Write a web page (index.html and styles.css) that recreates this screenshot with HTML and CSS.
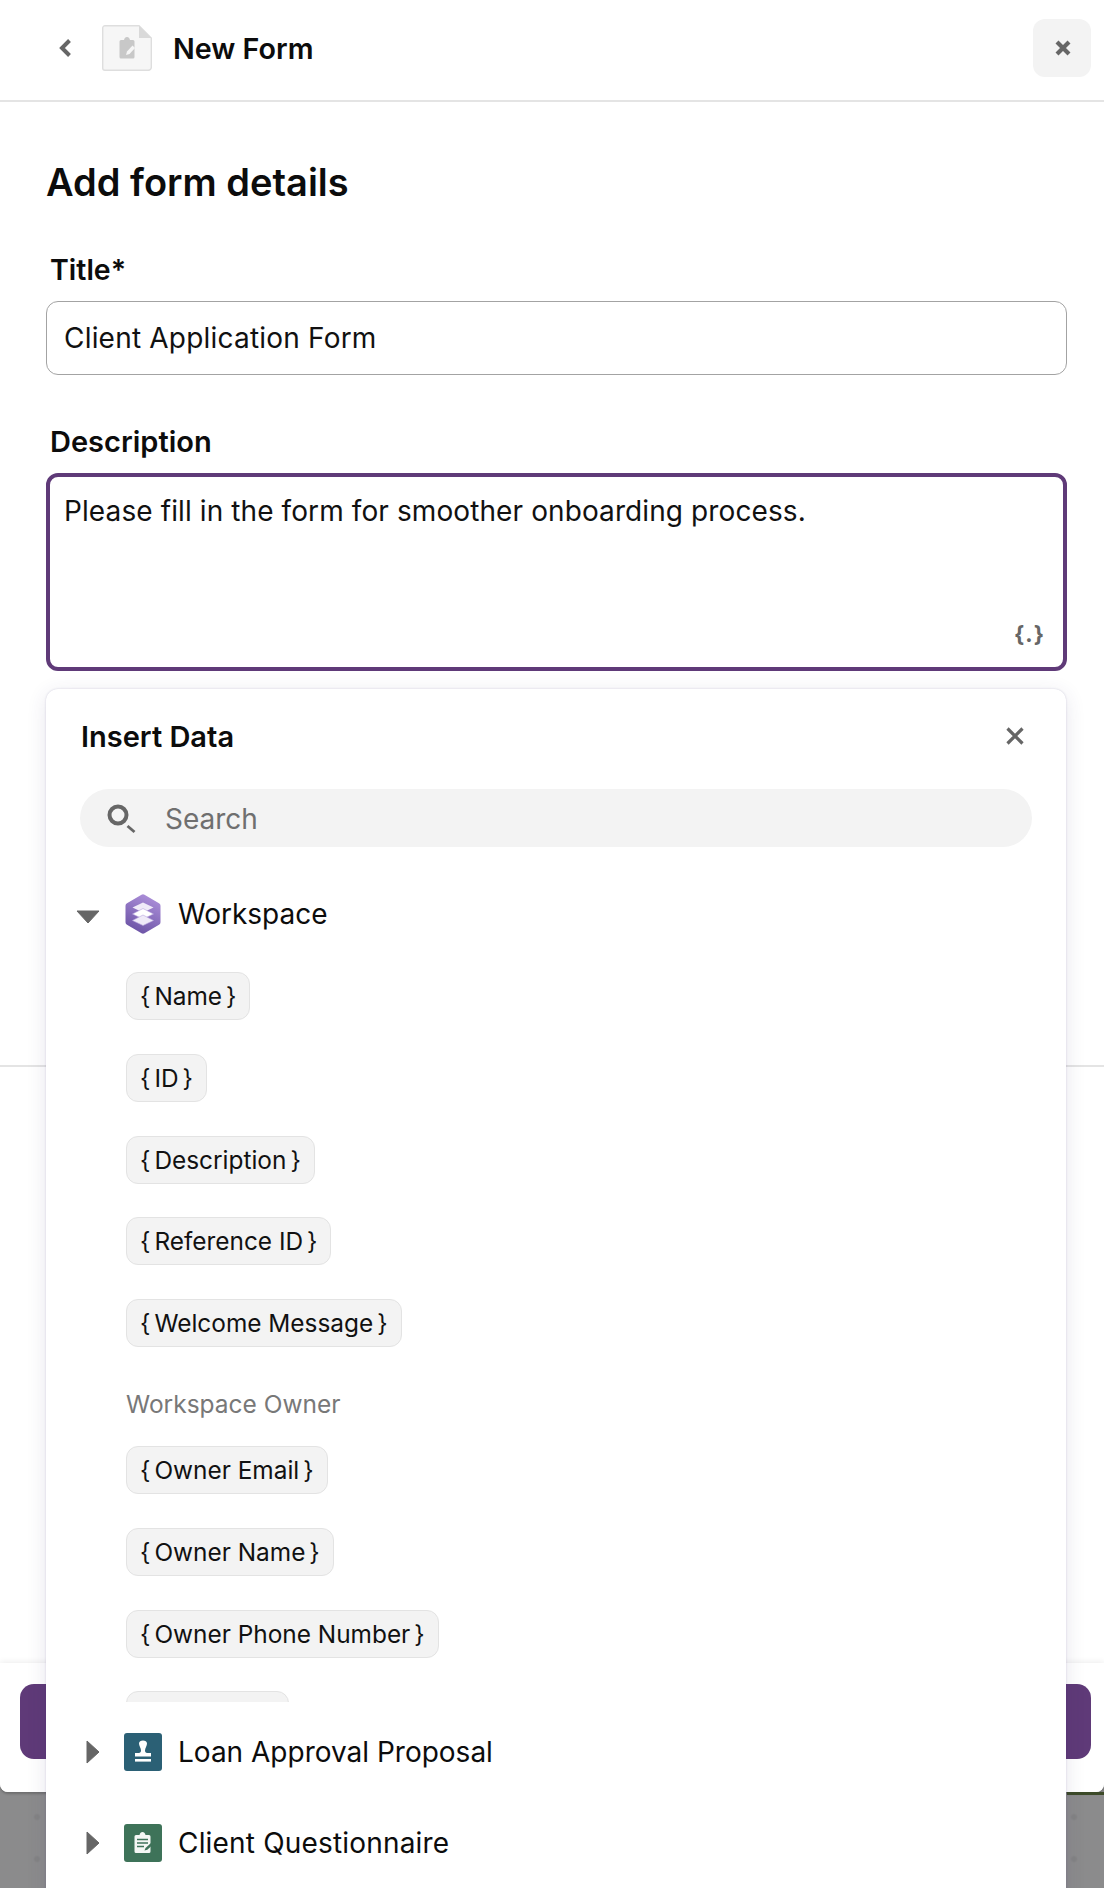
FILE: index.html
```html
<!DOCTYPE html>
<html lang="en">
<head>
<meta charset="utf-8">
<title>New Form</title>
<link rel="stylesheet" href="styles.css">
</head>
<body>
<div class="screen">
  <div class="sheet">
    <header class="topbar">
      <div class="topbar-left">
        <svg class="back" viewBox="0 0 14 20" width="14" height="20"><path d="M11.500 2.500 4 10l7.500 7.500" fill="none" stroke="#666" stroke-width="4"/></svg>
        <svg class="doc" viewBox="0 0 50 46" width="50" height="46">
          <path d="M3 .7h34L49.300 13v29a3 3 0 0 1-3 3.300H3A2.300 2.300 0 0 1 .7 43V3A2.300 2.300 0 0 1 3 .7Z" fill="#f6f6f6" stroke="#dedede" stroke-width="1.400"/>
          <path d="M37 .7 49.300 13H37Z" fill="#d9d9d9"/>
          <path d="M19 15h3c.4-2 1.500-3 3-3s2.600 1 3 3h3a1.500 1.500 0 0 1 1.500 1.500V32a1.500 1.500 0 0 1-1.500 1.500H19a1.500 1.500 0 0 1-1.500-1.500V16.500A1.500 1.500 0 0 1 19 15Z" fill="#c8c8c8"/>
          <path d="m24 30 1-3.500 5.500-6 2.500 2.500-5.500 6Z" fill="#f6f6f6"/>
        </svg>
        <span class="topbar-title">New Form</span>
      </div>
      <button class="close-btn" type="button" aria-label="Close">
        <svg viewBox="0 0 18 18" width="18" height="18"><path d="M3 3l12 12M15 3 3 15" stroke="#666" stroke-width="4.200" fill="none"/></svg>
      </button>
    </header>
    <main class="form">
      <h1 class="form-heading">Add form details</h1>
      <label class="field-label">Title*</label>
      <div class="input">Client Application Form</div>
      <label class="field-label field-label-second">Description</label>
      <div class="textarea">
        Please fill in the form for smoother onboarding process.
        <span class="data-token">{.}</span>
      </div>
    </main>
    <footer class="footer">
      <div class="primary-btn"></div>
    </footer>
  </div>
  <div class="edge-strip"></div>

  <section class="panel">
    <div class="panel-head">
      <span class="panel-title">Insert Data</span>
      <svg viewBox="0 0 20 20" width="20" height="20"><path d="M2.500 2.500l15 15M17.500 2.500l-15 15" stroke="#666" stroke-width="3.200" fill="none"/></svg>
    </div>
    <div class="search">
      <svg class="search-icon" viewBox="0 0 30 32" width="30" height="32"><circle cx="12" cy="13" r="8.500" fill="none" stroke="#666" stroke-width="4"/><path d="m21.500 24 7 6" stroke="#666" stroke-width="2.800"/></svg>
      <span class="search-text">Search</span>
    </div>
    <div class="tree-row tree-row-open">
      <svg class="caret-down" viewBox="0 0 24 14" width="24" height="14"><path d="M1 1h22L12 13Z" fill="#666" stroke="#666" stroke-linejoin="round"/></svg>
      <svg class="tree-icon" viewBox="0 0 36 40" width="36" height="40">
        <defs><linearGradient id="hexfill" x1="0.700" y1="0" x2="0.300" y2="1"><stop offset="0" stop-color="#ad90da"/><stop offset="1" stop-color="#6a52a4"/></linearGradient></defs>
        <path d="M16.500 .8a3 3 0 0 1 3 0l14.500 8.400a3 3 0 0 1 1.500 2.600v16.400a3 3 0 0 1-1.500 2.600L19.500 39.200a3 3 0 0 1-3 0L2 30.800a3 3 0 0 1-1.500-2.600V11.800A3 3 0 0 1 2 9.200Z" fill="url(#hexfill)"/>
        <path d="m18 8.500 10.500 5L18 18.500l-10.500-5Z" fill="#efeaf8"/>
        <path d="m18 14.500 10.500 5.500L18 25 7.500 20Z" fill="#fff" stroke="#b7a4dd" stroke-width=".6"/>
        <path d="m18 21 10.500 5.500L18 31.500 7.500 26.500Z" fill="#efeaf8" stroke="#b7a4dd" stroke-width=".6"/>
      </svg>
      <span>Workspace</span>
    </div>
    <div class="chip-scroll">
      <div class="chip-list">
        <span class="chip">{<i>Name</i>}</span>
        <span class="chip">{<i>ID</i>}</span>
        <span class="chip">{<i>Description</i>}</span>
        <span class="chip">{<i>Reference ID</i>}</span>
        <span class="chip">{<i>Welcome Message</i>}</span>
        <span class="chip-group">Workspace Owner</span>
        <span class="chip">{<i>Owner Email</i>}</span>
        <span class="chip">{<i>Owner Name</i>}</span>
        <span class="chip">{<i>Owner Phone Number</i>}</span>
        <span class="chip chip-cut"></span>
      </div>
    </div>
    <div class="tree-row tree-row-loan">
      <svg class="caret-right" viewBox="0 0 14 24" width="14" height="24"><path d="M1 1v22l12-11Z" fill="#666" stroke="#666" stroke-linejoin="round"/></svg>
      <span class="tile tile-blue">
        <svg viewBox="0 0 38 38" width="38" height="38"><path d="M15 10.500c0-1.900 1.800-3 4-3s4 1.100 4 3c0 2.700-2 4.300-2 7 0 1.500.7 2.500 2.200 2.500h3.800v3.500H11V20h3.800c1.500 0 2.200-1 2.200-2.500 0-2.700-2-4.300-2-7Z" fill="#fff"/><rect x="11" y="26" width="16" height="2.600" fill="#fff"/></svg>
      </span>
      <span>Loan Approval Proposal</span>
    </div>
    <div class="tree-row tree-row-client">
      <svg class="caret-right" viewBox="0 0 14 24" width="14" height="24"><path d="M1 1v22l12-11Z" fill="#666" stroke="#666" stroke-linejoin="round"/></svg>
      <span class="tile tile-green">
        <svg viewBox="0 0 38 38" width="38" height="38"><path d="M12 11h3.500c.4-1.800 1.600-3 3-3s2.600 1.200 3 3H25a1.500 1.500 0 0 1 1.500 1.500v15A1.500 1.500 0 0 1 25 29H12a1.500 1.500 0 0 1-1.500-1.500v-15A1.500 1.500 0 0 1 12 11Z" fill="#f4f7f4"/><path d="M13 15.500h11M13 19h11M13 22.500h7" stroke="#3e7359" stroke-width="1.600"/><path d="m20.500 26.500 1-2.500 5.500-5 1.800 1.800-5.500 5Z" fill="#3e7359"/></svg>
      </span>
      <span class="tree-label-wide">Client Questionnaire</span>
    </div>
  </section>
</div>
</body>
</html>
```
FILE: styles.css
```css
* { box-sizing: border-box; }
html, body { margin: 0; padding: 0; }
body { font-family: Inter, "Liberation Sans", sans-serif; color: #111; background: #8b8b8c; }

.screen {
  position: relative;
  width: 1104px;
  height: 1888px;
  overflow: hidden;
  background-color: #8b8b8c;
  background-image: radial-gradient(circle, #838384 0, #838384 2px, transparent 4px);
  background-size: 1037px 42px;
  background-position: -481.5px 1796px;
}

.sheet {
  display: flex;
  flex-direction: column;
  height: 1792px;
  background: #fff;
  border-radius: 0 0 8px 8px;
  box-shadow: 0 2px 2px rgba(0,0,0,.18);
}
.edge-strip { position: absolute; left: 1067px; top: 1792px; width: 37px; height: 3px; background: #3c4a28; }

.topbar {
  display: flex;
  align-items: center;
  justify-content: space-between;
  height: 102px;
  padding: 0 13px 5px 58px;
  border-bottom: 2px solid #e4e4e4;
  flex: none;
}
.topbar-left { display: flex; align-items: center; }
.back { margin-right: 30px; }
.doc { margin-right: 21px; }
.topbar-title { margin-top: 2px; font-size: 28.700px; font-weight: 600; color: #0c0c0c; }
.close-btn {
  display: flex;
  align-items: center;
  justify-content: center;
  width: 58px;
  height: 58px;
  padding: 0 0 0 2px;
  border: 0;
  border-radius: 12px;
  background: #f3f3f3;
}

.form {
  flex: none;
  height: 965px;
  padding: 58px 37px 0 46px;
  border-bottom: 2px solid #e4e4e4;
}
.form-heading { margin: 0 0 49px; font-size: 38px; line-height: 44px; font-weight: 600; color: #0c0c0c; }
.field-label { display: block; margin: 0 0 14px 4px; font-size: 28.500px; line-height: 34px; font-weight: 600; color: #0c0c0c; }
.field-label-second { margin-top: 50px; font-size: 29px; }
.input {
  height: 74px;
  padding: 0 17px;
  border: 1.500px solid #a3a3a3;
  border-radius: 12px;
  font-size: 28px;
  letter-spacing: .2px;
  line-height: 73px;
}
.textarea {
  position: relative;
  height: 198px;
  padding: 17px 14px;
  border: 4px solid #5f3a78;
  border-radius: 12px;
  font-size: 28px;
  letter-spacing: .1px;
  line-height: 34px;
}
.data-token {
  position: absolute;
  right: 18px;
  bottom: 20px;
  font-size: 22px;
  line-height: 26px;
  font-weight: 700;
  letter-spacing: 1px;
  color: #666;
}

.footer {
  flex: 1;
  display: flex;
  margin-top: 596px;
  padding: 21px 13px 33px 20px;
  background: #fff;
  border-radius: 0 0 8px 8px;
  box-shadow: 0 -1px 6px rgba(0,0,0,.08);
}
.primary-btn { flex: 1; background: #5f3a78; border-radius: 14px; }

.panel {
  position: absolute;
  left: 46px;
  top: 689px;
  width: 1020px;
  height: 1240px;
  padding: 0 34px;
  background: #fff;
  border-radius: 12px;
  box-shadow: 0 0 2px rgba(60,50,110,.22), 0 4px 20px rgba(60,50,110,.12);
}
.panel-head { display: flex; align-items: center; justify-content: space-between; height: 94px; padding: 0 7px 0 1px; }
.panel-title { font-size: 29px; font-weight: 600; color: #0c0c0c; }
.search {
  display: flex;
  align-items: center;
  height: 58px;
  margin-top: 6px;
  padding-left: 26px;
  border-radius: 29px;
  background: #f3f3f3;
}
.search-text { margin: 2px 0 0 29px; font-size: 28px; color: #6f6f6f; }

.tree-row { display: flex; align-items: center; font-size: 28px; line-height: 40px; color: #0c0c0c; }
.tree-row-open { margin-top: 47px; margin-left: -4px; }
.caret-down { margin-right: 25px; margin-top: 6px; }
.tree-icon { margin-right: 17px; }
.caret-right { margin-left: 10px; margin-right: 24px; }
.tile { display: block; width: 38px; height: 38px; margin-right: 16px; border-radius: 3px; }
.tile svg { display: block; }
.tile-blue { background: #2b6075; }
.tile-green { background: #3e7359; }
.tree-row-loan { margin-top: 30px; margin-left: -4px; }
.tree-row-client { margin-top: 51px; margin-left: -4px; }
.tree-label-wide { letter-spacing: .18px; }

.chip-scroll { height: 768px; overflow: hidden; }
.chip-list { display: flex; flex-direction: column; align-items: flex-start; gap: 33.750px; padding: 38px 0 0 46px; }
.chip {
  display: inline-flex;
  align-items: center;
  flex: none;
  height: 48px;
  padding: 0 13px;
  border: 1px solid #e3e3e3;
  border-radius: 12px;
  background: #f3f3f3;
  font-size: 24.400px;
  white-space: nowrap;
}
.chip i { font-style: normal; margin: 0 4px; }
.chip-cut { width: 163px; }
.chip-group { flex: none; margin: 8px 0 -6.500px; font-size: 24.500px; line-height: 30px; color: #787878; }
```
